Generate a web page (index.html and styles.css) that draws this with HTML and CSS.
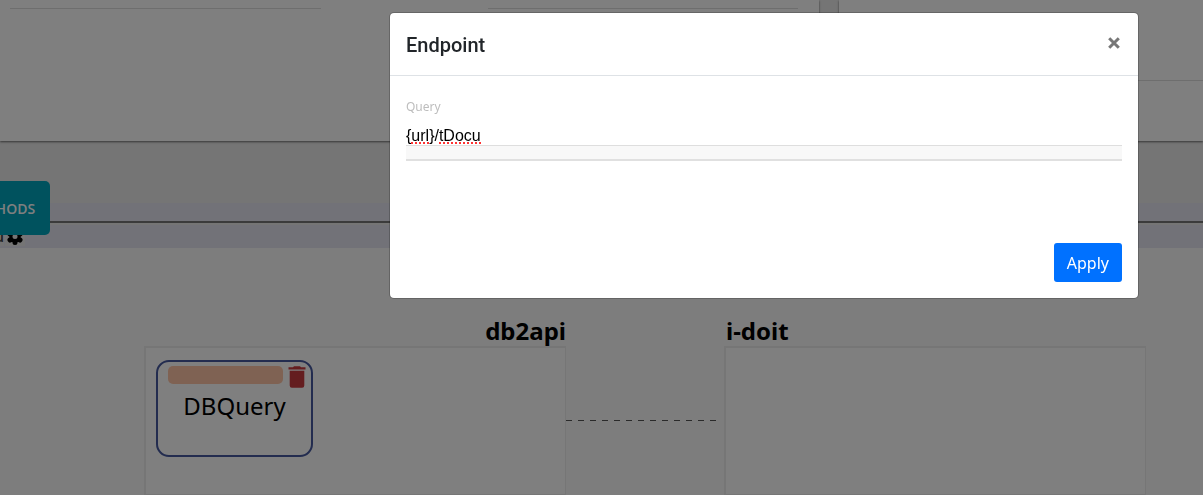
FILE: index.html
```html
<!DOCTYPE html>
<html lang="en">
<head>
<meta charset="utf-8">
<title>Endpoint</title>
<link rel="stylesheet" href="styles.css">
</head>
<body>
<main class="page">
  <section class="cards">
    <div class="card card-form">
      <div class="field-line"></div>
      <div class="field-line"></div>
    </div>
    <div class="card card-side"><div class="side-line"></div></div>
  </section>
  <section class="toolbar">
    <div class="band band-top"></div>
    <div class="band band-bottom">
      <span class="menu-text">u</span>
      <span class="menu-gear">
        <svg class="gear" viewBox="0 0 18 18" aria-hidden="true">
          <g stroke="#000" stroke-width="5" stroke-linecap="round"><path d="M9 3.500v11M4 6l10 6M14 6 4 12"/></g>
          <circle cx="9" cy="9" r="5.500"/><circle cx="9" cy="8.500" r="2.500" fill="#eaeaea"/>
        </svg>
      </span>
    </div>
    <button class="methods" type="button">METHODS</button>
  </section>
  <section class="canvas">
    <div class="column">
      <h2 class="column-title column-title-end">db2api</h2>
      <div class="panel">
        <div class="process">
          <div class="process-bar">
            <span class="process-color"></span>
            <svg class="trash" viewBox="0 0 18 22" aria-hidden="true"><path d="M.5 1.2H5L6 .3h6l1 .9h4.500v2.300H.5zM1.700 4.700h14.600V19.500q0 2.200-2.200 2.200H3.900q-2.200 0-2.200-2.200z"/></svg>
          </div>
          <span class="process-name">DBQuery</span>
        </div>
      </div>
    </div>
    <div class="connector"></div>
    <div class="column">
      <h2 class="column-title">i-doit</h2>
      <div class="panel"></div>
    </div>
  </section>
</main>
<div class="backdrop">
  <div class="dialog" role="dialog" aria-labelledby="dialog-title">
    <header class="dialog-header">
      <h1 class="dialog-title" id="dialog-title">Endpoint</h1>
      <button class="close" type="button" aria-label="Close">
        <svg class="close-icon" viewBox="0 0 14 14" aria-hidden="true"><path d="M2.200 2.200l9.600 9.600M11.800 2.200l-9.600 9.600"/></svg>
      </button>
    </header>
    <div class="dialog-body">
      <label class="query-label" for="query">Query</label>
      <div class="query-box">
        <input class="query-input" id="query" type="text" value="{url}/tDocu" spellcheck="false">
        <span class="typo typo-url"></span>
        <span class="typo typo-docu"></span>
      </div>
      <div class="query-strip"></div>
    </div>
    <footer class="dialog-footer">
      <button class="apply" type="button">Apply</button>
    </footer>
  </div>
</div>
</body>
</html>
```
FILE: styles.css
```css
* { box-sizing: border-box; }
body {
  margin: 0;
  font-family: "Noto Sans", "Open Sans", sans-serif;
  background: #eaeaea;
}
button, input { font: inherit; border: 0; margin: 0; }
.page {
  display: flex;
  flex-direction: column;
  height: 100vh;
  overflow: hidden;
}
.cards {
  display: grid;
  grid-template-columns: 819fr 364fr;
  gap: 20px;
}
.card {
  height: 141px;
  background: #fff;
  box-shadow: 0 1px 2px rgba(0, 0, 0, .55);
}
.card-form {
  display: grid;
  grid-template-columns: 1fr 1fr;
  gap: 167px;
  padding: 8px 21px 0 10px;
}
.card-side { padding-top: 80px; }
.field-line, .side-line { height: 1px; background: #dcdcdc; }
.toolbar { position: relative; padding-top: 62px; }
.band { background: #e4e5f0; }
.band-top { height: 20px; border-bottom: 2px solid #767676; }
.band-bottom {
  display: flex;
  align-items: flex-end;
  height: 25px;
  border-top: 2px solid #eaeaea;
  padding-bottom: 2px;
}
.menu-text {
  width: 4px;
  margin-right: 1px;
  display: flex;
  justify-content: flex-end;
  font-size: 14px;
  font-weight: 600;
  line-height: 18px;
  color: #444;
  background: #eaeaea;
}
.menu-gear { display: flex; width: 20px; background: #eaeaea; justify-content: center; }
.gear { width: 18px; height: 18px; }
.methods {
  position: absolute;
  left: -48px;
  top: 40px;
  height: 54px;
  padding: 0 15px;
  width: 98px;
  text-align: right;
  border-radius: 5px;
  background: #00a4bd;
  color: #fff;
  font-family: "Open Sans", "Noto Sans", sans-serif;
  font-size: 14px;
  font-weight: 600;
}
.canvas {
  flex: 1;
  display: grid;
  grid-template-columns: 422fr 158fr 422fr;
  padding: 68px 57px 0 144px;
  background: #fafafa;
}
.column { display: flex; flex-direction: column; }
.column-title {
  margin: 0;
  padding-left: 2px;
  font-size: 24px;
  font-weight: 700;
  line-height: 30px;
}
.column-title-end { text-align: right; }
.panel {
  flex: 1;
  background: #fff;
  border: 2px solid #ededed;
  border-right-width: 1px;
  border-bottom-width: 1px;
  padding: 12px 10px;
}
.process {
  width: 157px;
  height: 97px;
  border: 2px solid #46599f;
  border-radius: 13px;
  background: #fff;
  padding-top: 4px;
}
.process-bar {
  display: flex;
  justify-content: space-between;
  height: 22px;
  padding: 0 5px 0 10px;
}
.process-color { width: 115px; height: 18px; border-radius: 5px; background: #ffc5a7; }
.trash { width: 18px; height: 22px; fill: #c93a3f; }
.process-name {
  display: block;
  text-align: center;
  font-size: 24px;
  line-height: 36px;
}
.connector {
  align-self: start;
  height: 1px;
  margin: 104px 6px 0 0;
  background: repeating-linear-gradient(90deg, #555 0 6px, transparent 6px 12px);
}
.backdrop {
  position: fixed;
  inset: 0;
  display: flex;
  align-items: flex-start;
  padding: 12px 64px 0 389px;
  background: rgba(0, 0, 0, .5);
}
.dialog {
  flex: 1;
  background: #fff;
  background-clip: padding-box;
  border: 1px solid rgba(0, 0, 0, .2);
  border-radius: 5px;
}
.dialog-header {
  display: flex;
  justify-content: space-between;
  align-items: flex-start;
  padding: 16px 16px 14px;
  border-bottom: 1px solid #dee2e6;
}
.dialog-title {
  margin: 0;
  color: #212529;
  font-family: Roboto, "Liberation Sans", sans-serif;
  font-size: 20px;
  font-weight: 500;
  line-height: 32px;
}
.close { display: flex; padding: 7px 1px; background: none; }
.close-icon { width: 14px; height: 14px; stroke: #777; stroke-width: 3; }
.dialog-body { padding: 22px 16px 82px; }
.query-label {
  display: block;
  color: #bdbdbd;
  font-size: 12px;
  line-height: 18px;
}
.query-box { position: relative; margin-top: 9px; }
.query-input {
  display: block;
  width: 100%;
  height: 20px;
  padding: 2px 0 0;
  background: none;
  color: #000;
  outline: 0;
  font-family: "Liberation Sans", Arial, sans-serif;
  font-size: 16px;
}
.typo {
  position: absolute;
  bottom: 1px;
  height: 2px;
  background: repeating-linear-gradient(90deg, #f33 0 2px, transparent 2px 4px);
}
.typo-url { left: 5px; width: 18px; }
.typo-docu { left: 33px; width: 42px; }
.query-strip {
  height: 16px;
  border-top: 1px solid #dedede;
  border-bottom: 2px solid #e0e0e0;
  background: #f8f8f8;
}
.dialog-footer { display: flex; justify-content: flex-end; padding: 0 16px 16px; }
.apply {
  height: 39px;
  padding: 0 13px;
  border-radius: 3px;
  background: #0071ff;
  color: #fff;
  font-size: 16px;
}
```
